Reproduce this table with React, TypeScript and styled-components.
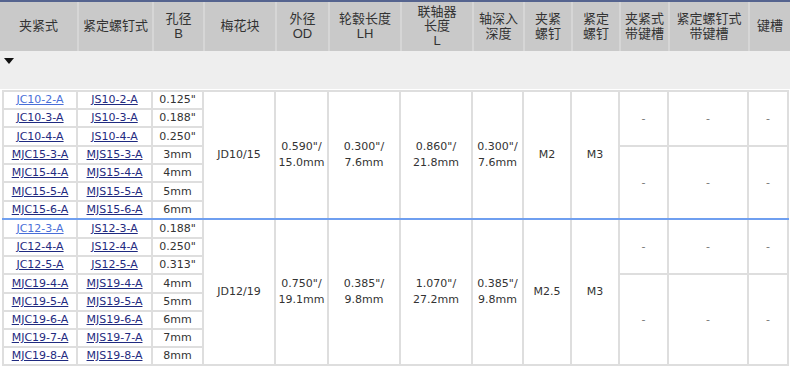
import React from "react";
import styled, { createGlobalStyle } from "styled-components";

const Global = createGlobalStyle`
  html, body { margin: 0; padding: 0; background: #ffffff; }
  body { font-family: "DejaVu Sans", "Noto Sans CJK SC", sans-serif; }
`;

const COLS = [74, 75, 51, 72, 53, 72, 72, 51, 48, 48, 49, 80, 40];
const HEAD_COLS = [77, 75, 51, 72, 53, 72, 72, 51, 48, 48, 49, 80, 42];

const Page = styled.div`
  width: 790px;
`;

const HeaderBar = styled.div`
  display: grid;
  grid-template-columns: ${HEAD_COLS.map((w) => `${w}px`).join(" ")};
  height: 49px;
  border-top: 2px solid #55648f;
  background: #c9c9c9;
`;

const HeadCell = styled.div`
  display: flex;
  align-items: center;
  justify-content: center;
  text-align: center;
  font-family: "Liberation Sans", "Noto Sans CJK SC", sans-serif;
  font-size: 13px;
  line-height: 14.5px;
  color: #333333;
  border-left: 2px solid #d6d6d6;
  &:first-child { border-left: none; }
`;

const SectionRow = styled.div`
  height: 38px;
  background: #eeeeee;
  padding: 7px 0 0 4px;
  box-sizing: border-box;
`;

const Caret = styled.span`
  display: block;
  width: 0;
  height: 0;
  border-left: 5px solid transparent;
  border-right: 5px solid transparent;
  border-top: 6px solid #111111;
`;

const Table = styled.table`
  border-collapse: collapse;
  table-layout: fixed;
  width: 786px;
  margin: 1px 0 0 2px;
  font-family: "DejaVu Sans", "Noto Sans CJK SC", sans-serif;
  font-size: 11px;
  color: #333333;
`;

const BodyRow = styled.tr<{ $h: number }>`
  height: ${(p) => p.$h}px;
`;

const Cell = styled.td<{ $sep?: boolean; $dash?: boolean }>`
  border: 2px solid #dedede;
  ${(p) => (p.$sep ? "border-bottom-color: #6f9ff0;" : "")}
  padding: 0;
  text-align: center;
  vertical-align: middle;
  line-height: 16px;
  white-space: nowrap;
  ${(p) => (p.$dash ? "color: #777777; font-size: 11px;" : "")}
`;

const PartLink = styled.a<{ $fresh?: boolean }>`
  color: ${(p) => (p.$fresh ? "#4a6fd8" : "#1f2a80")};
  text-decoration: underline;
`;

type Row = { c: string; s: string; b: string; fresh?: boolean };
type Group = {
  rows: Row[];
  heights: number[];
  jd: string;
  od: [string, string];
  lh: [string, string];
  l: [string, string];
  depth: [string, string];
  clamp: string;
  set: string;
  split: number;
  sep: boolean;
};

const groups: Group[] = [
  {
    rows: [
      { c: "JC10-2-A", s: "JS10-2-A", b: '0.125"', fresh: true },
      { c: "JC10-3-A", s: "JS10-3-A", b: '0.188"' },
      { c: "JC10-4-A", s: "JS10-4-A", b: '0.250"' },
      { c: "MJC15-3-A", s: "MJS15-3-A", b: "3mm" },
      { c: "MJC15-4-A", s: "MJS15-4-A", b: "4mm" },
      { c: "MJC15-5-A", s: "MJS15-5-A", b: "5mm" },
      { c: "MJC15-6-A", s: "MJS15-6-A", b: "6mm" },
    ],
    heights: [18, 18, 19, 18, 18, 19, 18],
    jd: "JD10/15",
    od: ['0.590"/', "15.0mm"],
    lh: ['0.300"/', "7.6mm"],
    l: ['0.860"/', "21.8mm"],
    depth: ['0.300"/', "7.6mm"],
    clamp: "M2",
    set: "M3",
    split: 3,
    sep: true,
  },
  {
    rows: [
      { c: "JC12-3-A", s: "JS12-3-A", b: '0.188"', fresh: true },
      { c: "JC12-4-A", s: "JS12-4-A", b: '0.250"' },
      { c: "JC12-5-A", s: "JS12-5-A", b: '0.313"' },
      { c: "MJC19-4-A", s: "MJS19-4-A", b: "4mm" },
      { c: "MJC19-5-A", s: "MJS19-5-A", b: "5mm" },
      { c: "MJC19-6-A", s: "MJS19-6-A", b: "6mm" },
      { c: "MJC19-7-A", s: "MJS19-7-A", b: "7mm" },
      { c: "MJC19-8-A", s: "MJS19-8-A", b: "8mm" },
    ],
    heights: [19, 18, 18, 19, 18, 18, 18, 18],
    jd: "JD12/19",
    od: ['0.750"/', "19.1mm"],
    lh: ['0.385"/', "9.8mm"],
    l: ['1.070"/', "27.2mm"],
    depth: ['0.385"/', "9.8mm"],
    clamp: "M2.5",
    set: "M3",
    split: 3,
    sep: false,
  },
];

const headers: string[][] = [
  ["夹紧式"],
  ["紧定螺钉式"],
  ["孔径", "B"],
  ["梅花块"],
  ["外径", "OD"],
  ["轮毂长度", "LH"],
  ["联轴器", "长度", "L"],
  ["轴深入", "深度"],
  ["夹紧", "螺钉"],
  ["紧定", "螺钉"],
  ["夹紧式", "带键槽"],
  ["紧定螺钉式", "带键槽"],
  ["键槽"],
];

const Lines = ({ parts }: { parts: string[] }) => (
  <>
    {parts.map((p, i) => (
      <React.Fragment key={i}>
        {i > 0 && <br />}
        {p}
      </React.Fragment>
    ))}
  </>
);

const GroupRows = ({ g }: { g: Group }) => {
  const n = g.rows.length;
  return (
    <tbody>
      {g.rows.map((r, i) => {
        const last = g.sep && i === n - 1;
        return (
          <BodyRow key={r.c} $h={g.heights[i]}>
            <Cell $sep={last}>
              <PartLink href="#" $fresh={r.fresh}>{r.c}</PartLink>
            </Cell>
            <Cell $sep={last}>
              <PartLink href="#">{r.s}</PartLink>
            </Cell>
            <Cell $sep={last}>{r.b}</Cell>
            {i === 0 && (
              <>
                <Cell rowSpan={n} $sep={g.sep}>{g.jd}</Cell>
                <Cell rowSpan={n} $sep={g.sep}><Lines parts={g.od} /></Cell>
                <Cell rowSpan={n} $sep={g.sep}><Lines parts={g.lh} /></Cell>
                <Cell rowSpan={n} $sep={g.sep}><Lines parts={g.l} /></Cell>
                <Cell rowSpan={n} $sep={g.sep}><Lines parts={g.depth} /></Cell>
                <Cell rowSpan={n} $sep={g.sep}>{g.clamp}</Cell>
                <Cell rowSpan={n} $sep={g.sep}>{g.set}</Cell>
                <Cell rowSpan={g.split} $dash>-</Cell>
                <Cell rowSpan={g.split} $dash>-</Cell>
                <Cell rowSpan={g.split} $dash>-</Cell>
              </>
            )}
            {i === g.split && (
              <>
                <Cell rowSpan={n - g.split} $dash $sep={g.sep}>-</Cell>
                <Cell rowSpan={n - g.split} $dash $sep={g.sep}>-</Cell>
                <Cell rowSpan={n - g.split} $dash $sep={g.sep}>-</Cell>
              </>
            )}
          </BodyRow>
        );
      })}
    </tbody>
  );
};

export default function App() {
  return (
    <Page>
      <Global />
      <HeaderBar>
        {headers.map((h, i) => (
          <HeadCell key={i}>
            <div>
              <Lines parts={h} />
            </div>
          </HeadCell>
        ))}
      </HeaderBar>
      <SectionRow>
        <Caret />
      </SectionRow>
      <Table>
        <colgroup>
          {COLS.map((w, i) => (
            <col key={i} style={{ width: w }} />
          ))}
        </colgroup>
        {groups.map((g) => (
          <GroupRows key={g.jd} g={g} />
        ))}
      </Table>
    </Page>
  );
}
